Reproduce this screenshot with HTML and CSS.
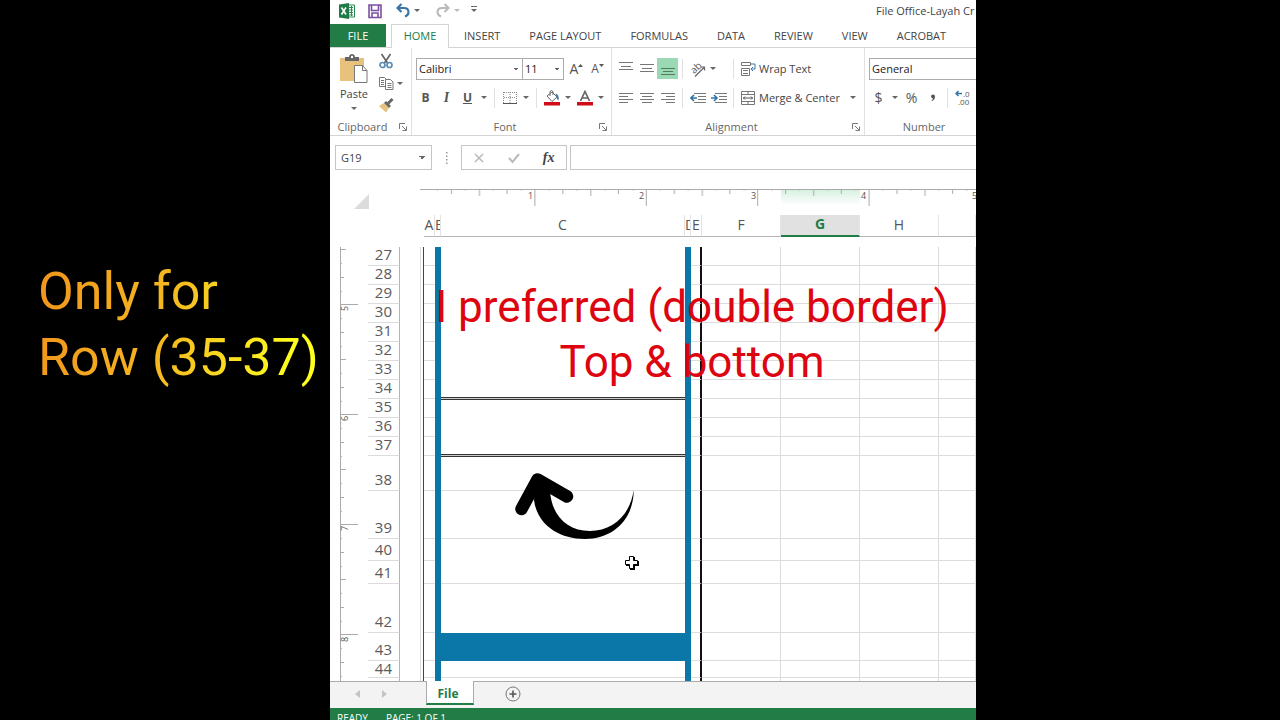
FILE: index.html
```
<!DOCTYPE html>
<html lang="en">

<head>
    <meta charset="UTF-8">
    <meta name="viewport" content="width=device-width, initial-scale=1.0">
    <title>File Office-Layah</title>
    <link rel="stylesheet" href="styles.css">
</head>

<body>
    <div class="stage">
        <aside class="side">
            <p class="note">Only for<br>Row (35-37)</p>
        </aside>

        <main class="excel">
            <header class="titlebar">
                <svg class="logo" width="16" height="16" viewBox="0 0 16 16">
                    <path d="M9 2h6.500v12H9z" fill="#fff" stroke="#2a8a52" />
                    <path d="M10 4.500h4M10 7h4M10 9.500h4M10 12h4M12.500 3v10" stroke="#2a8a52" />
                    <path d="M0 1.500L10 0v16L0 14.500z" fill="#1f7c46" />
                    <path d="M2.500 4.500l4.500 7M7 4.500l-4.500 7" stroke="#fff" stroke-width="1.600" />
                </svg>
                <button class="quick" aria-label="Save"><svg width="16" height="16" viewBox="0 0 16 16" fill="none" stroke="#7a4fa3" stroke-width="1.600"><path d="M2 2h12v12.500H2zM4.500 2v5.500h7V2M5 14v-4h6v4" /></svg></button>
                <button class="quick" aria-label="Undo"><svg width="16" height="16" viewBox="0 0 16 16" fill="none" stroke="#3c76a8" stroke-width="2.200"><path d="M6.500 1L2.500 5l4 4M3 5h6c5.500 0 6 6.500 1 8.500" /></svg></button>
                <button class="drop" aria-label="Undo list"><i class="caret"></i></button>
                <button class="quick" aria-label="Redo"><svg width="16" height="16" viewBox="0 0 16 16" fill="none" stroke="#b9b9b9" stroke-width="2"><path d="M9.500 1l4 4-4 4M13 5H7c-5.500 0-6 6.500-1 8.500" /></svg></button>
                <button class="drop pale" aria-label="Redo list"><i class="caret"></i></button>
                <button class="drop custom" aria-label="Customize toolbar"><i class="caret lined"></i></button>
                <span class="doc">File Office-Layah Cr</span>
            </header>

            <nav class="tabs">
                <a class="tab file" href="#">FILE</a>
                <a class="tab home" href="#">HOME</a>
                <a class="tab" href="#">INSERT</a>
                <a class="tab" href="#">PAGE LAYOUT</a>
                <a class="tab" href="#">FORMULAS</a>
                <a class="tab" href="#">DATA</a>
                <a class="tab" href="#">REVIEW</a>
                <a class="tab" href="#">VIEW</a>
                <a class="tab" href="#">ACROBAT</a>
            </nav>

            <div class="ribbon">
                <section class="group clipboard">
                    <div class="tools">
                        <button class="paste">
                            <svg width="28" height="30" viewBox="0 0 28 30">
                                <path d="M0 4h24v23H0z" fill="#e8c27c" />
                                <path d="M5 7V3h4c0-4 6-4 6 0h4v4z" fill="#666" />
                                <circle cx="12" cy="3" r="1.200" fill="#fff" />
                                <path d="M14.500 11.500h8l4.500 5v12H14.500z" fill="#fff" stroke="#777" />
                                <path d="M22.500 11.500v5H27" fill="none" stroke="#777" />
                            </svg>
                            Paste
                            <i class="caret"></i>
                        </button>
                        <div class="edit">
                            <button class="tool" aria-label="Cut"><svg width="16" height="16" viewBox="0 0 16 16" fill="none" stroke-width="1.700"><path d="M3.500 1l6 9M12.500 1l-6 9" stroke="#666" /><circle cx="4.500" cy="12" r="2.500" stroke="#5b8db5" /><circle cx="11.500" cy="12" r="2.500" stroke="#5b8db5" /></svg></button>
                            <div class="row"><button class="tool" aria-label="Copy"><svg width="16" height="16" viewBox="0 0 16 16" fill="#fff" stroke="#777"><path d="M1.500 2.500h5l2 2v7h-7z" /><path d="M3 5.500h3M3 7.500h3M3 9.500h3" /><path d="M7.500 4.500h5l2.500 2.500v7.500H7.500z" /><path d="M9.500 8.500h4M9.500 10.500h4M9.500 12.500h4" /></svg></button><button class="drop" aria-label="Copy options"><i class="caret"></i></button></div>
                            <button class="tool" aria-label="Format painter"><svg width="16" height="16" viewBox="0 0 16 16"><path d="M1 9l5-3 5 5-3 4.500z" fill="#e8c27c" /><path d="M6 6l2-2 5 5-2 2z" fill="#666" /><path d="M10 6.500l4.500-4.500" stroke="#666" stroke-width="3" /></svg></button>
                        </div>
                    </div>
                    <div class="caption"><span>Clipboard</span><button class="launch" aria-label="Clipboard settings"><svg width="8" height="8" viewBox="0 0 8 8" fill="none" stroke="#777"><path d="M.5 6V.5H6M3 3l4 4M7.500 3.500v4h-4" /></svg></button></div>
                </section>

                <section class="group fonts">
                    <div class="row">
                        <select class="combo family" aria-label="Font"><option>Calibri</option></select>
                        <select class="combo size" aria-label="Font size"><option>11</option></select>
                        <button class="tool grow" aria-label="Increase font size">A<svg width="5" height="10" viewBox="0 0 5 10"><path d="M0 3l2.500-3L5 3z" fill="#555" /></svg></button>
                        <button class="tool shrink" aria-label="Decrease font size">A<svg width="5" height="10" viewBox="0 0 5 10"><path d="M0 0h5L2.500 3z" fill="#555" /></svg></button>
                    </div>
                    <div class="row">
                        <button class="tool"><b>B</b></button>
                        <button class="tool"><em>I</em></button>
                        <button class="tool"><u>U</u></button>
                        <button class="drop" aria-label="Underline options"><i class="caret"></i></button>
                        <i class="sep"></i>
                        <button class="tool" aria-label="Borders"><svg width="14" height="14" viewBox="0 0 14 14" fill="none" stroke="#888"><path d="M.5 1v11M13.500 1v11M7 1v11M1 1.500h12M1 6.500h12" stroke-dasharray="1 1" /><path d="M0 12.500h14" stroke="#555" /></svg></button>
                        <button class="drop" aria-label="Border options"><i class="caret"></i></button>
                        <i class="sep"></i>
                        <button class="tool" aria-label="Fill color"><svg width="16" height="16" viewBox="0 0 16 16"><path d="M3 6l5-4 5 5-5 4.500z" fill="#fff" stroke="#666" /><path d="M6 6V1.500q1.500-2 3 0V5" fill="none" stroke="#666" /><path d="M11.500 3.500q4 1 3 7-2-1-2-4z" fill="#3c76a8" /><path d="M0 12h16v3.500H0z" fill="#d00d16" /></svg></button>
                        <button class="drop" aria-label="Fill options"><i class="caret"></i></button>
                        <button class="tool" aria-label="Font color"><svg width="16" height="16" viewBox="0 0 16 16"><path d="M3.500 11L8 1.500l4.500 9.500M5 8h6" fill="none" stroke="#666" stroke-width="1.700" /><path d="M0 12h16v3.500H0z" fill="#d00d16" /></svg></button>
                        <button class="drop" aria-label="Font color options"><i class="caret"></i></button>
                    </div>
                    <div class="caption"><span>Font</span><button class="launch" aria-label="Font settings"><svg width="8" height="8" viewBox="0 0 8 8" fill="none" stroke="#777"><path d="M.5 6V.5H6M3 3l4 4M7.500 3.500v4h-4" /></svg></button></div>
                </section>

                <section class="group align">
                    <div class="row">
                        <button class="tool" aria-label="Top align"><svg width="14" height="14" viewBox="0 0 14 14" stroke="#777"><path d="M0 .5h14M2 4.500h10M0 7.500h14" /></svg></button>
                        <button class="tool" aria-label="Middle align"><svg width="14" height="14" viewBox="0 0 14 14" stroke="#777"><path d="M0 2.500h14M2 6.500h10M0 9.500h14" /></svg></button>
                        <button class="tool on" aria-label="Bottom align"><svg width="14" height="14" viewBox="0 0 14 14" stroke="#4e7c63"><path d="M0 6.500h14M2 9.500h10M0 12.500h14" /></svg></button>
                        <i class="sep"></i>
                        <button class="tool" aria-label="Orientation"><svg class="angle" width="16" height="16" viewBox="0 0 16 16"><text class="ab" x="0" y="11" transform="rotate(-45 5 7)">ab</text><path d="M5 15.500L14 6.500M14.500 9.500V6H11" fill="none" stroke="#666" stroke-width="1.200" /></svg></button>
                        <button class="drop wide" aria-label="Orientation options"><i class="caret"></i></button>
                        <i class="sep"></i>
                        <button class="labelled"><svg width="16" height="16" viewBox="0 0 16 16" fill="none" stroke="#777"><path d="M1.500 1.500h9v3h-9zM1.500 7.500h8v7h-8zM3 9.500h5M3 12.500h5" /><path d="M10.500 3H15v5h-4M13 6l-2 2 2 2" stroke="#3c76a8" /></svg>Wrap Text</button>
                    </div>
                    <div class="row">
                        <button class="tool" aria-label="Align left"><svg width="14" height="14" viewBox="0 0 14 14" stroke="#777"><path d="M0 2.500h14M0 5.500h9M0 8.500h14M0 11.500h9" /></svg></button>
                        <button class="tool" aria-label="Center"><svg width="14" height="14" viewBox="0 0 14 14" stroke="#777"><path d="M0 2.500h14M2 5.500h10M0 8.500h14M2 11.500h10" /></svg></button>
                        <button class="tool" aria-label="Align right"><svg width="14" height="14" viewBox="0 0 14 14" stroke="#777"><path d="M0 2.500h14M5 5.500h9M0 8.500h14M5 11.500h9" /></svg></button>
                        <i class="sep"></i>
                        <button class="tool" aria-label="Decrease indent"><svg width="16" height="14" viewBox="0 0 16 14" fill="none" stroke="#777"><path d="M4 2.500h12M8 5.500h8M8 8.500h8M4 11.500h12" /><path d="M7 7H1M4 4L1 7l3 3" stroke="#2f74a8" stroke-width="1.600" /></svg></button>
                        <button class="tool" aria-label="Increase indent"><svg width="16" height="14" viewBox="0 0 16 14" fill="none" stroke="#777"><path d="M4 2.500h12M8 5.500h8M8 8.500h8M4 11.500h12" /><path d="M0 7h6M3 4l3 3-3 3" stroke="#2f74a8" stroke-width="1.600" /></svg></button>
                        <i class="sep"></i>
                        <button class="labelled"><svg width="16" height="16" viewBox="0 0 16 16" fill="none" stroke="#777"><path d="M1.500 1.500h13v13h-13zM1.500 4.500h13M1.500 11.500h13M8 1.500v3M8 11.500v3" /><path d="M3 8h10M5 6.500L3.500 8 5 9.500M11 6.500L12.500 8 11 9.500" stroke="#555" /></svg>Merge &amp; Center</button>
                        <button class="drop" aria-label="Merge options"><i class="caret"></i></button>
                    </div>
                    <div class="caption"><span>Alignment</span><button class="launch" aria-label="Alignment settings"><svg width="8" height="8" viewBox="0 0 8 8" fill="none" stroke="#777"><path d="M.5 6V.5H6M3 3l4 4M7.500 3.500v4h-4" /></svg></button></div>
                </section>

                <section class="group number">
                    <div class="row">
                        <select class="combo format" aria-label="Number format"><option>General</option></select>
                    </div>
                    <div class="row">
                        <button class="tool sign">$</button>
                        <button class="drop" aria-label="Currency options"><i class="caret"></i></button>
                        <button class="tool sign">%</button>
                        <button class="tool" aria-label="Comma style"><svg width="6" height="8" viewBox="0 0 6 8"><path d="M1 2.500a2 2 0 1 1 4 0q0 3-3 4.500l-.5-.8Q3 5.300 3 4.300 1 4 1 2.500z" fill="#555" /></svg></button>
                        <i class="sep"></i>
                        <button class="tool" aria-label="Increase decimal"><svg width="16" height="16" viewBox="0 0 16 16"><path d="M7 3.500H1M3.500 1L1 3.500 3.500 6" fill="none" stroke="#2f74a8" stroke-width="1.400" /><text class="dec" x="8" y="7">.0</text><text class="dec" x="3" y="15">.00</text></svg></button>
                    </div>
                    <div class="caption"><span>Number</span><button class="launch" aria-label="Number settings"></button></div>
                </section>
            </div>

            <div class="formula">
                <select class="namebox" aria-label="Name box"><option>G19</option></select>
                <svg class="dots" width="3" height="14" viewBox="0 0 3 14" fill="#999"><path d="M1 1h1.500v1.500H1zM1 4.500h1.500V6H1zM1 8h1.500v1.500H1zM1 11.500h1.500V13H1z" /></svg>
                <div class="checks">
                    <button aria-label="Cancel"><svg width="12" height="12" viewBox="0 0 12 12"><path d="M2 2l8 8M10 2l-8 8" stroke="#bbb" stroke-width="1.600" /></svg></button>
                    <button aria-label="Enter"><svg width="14" height="12" viewBox="0 0 14 12"><path d="M2 6l3.500 4L12 2" fill="none" stroke="#bbb" stroke-width="2" /></svg></button>
                    <button class="fx">fx</button>
                </div>
                <input class="entry" type="text" aria-label="Formula">
            </div>

            <div class="ruler">
                <div class="corner"><svg width="15" height="15" viewBox="0 0 15 15"><path d="M15 0v15H0z" fill="#dcdcdc" /></svg></div>
                <svg class="inches" height="18">
                    <defs>
                        <pattern id="inch" x="3" y="0" width="111.400" height="18" patternUnits="userSpaceOnUse">
                            <path d="M.5 0v17M28.500 0v5M56.500 0v7M84 0v5" stroke="#aaa" />
                            <path d="M14.500 0v2M42.500 0v2M70.500 0v2M98.500 0v2" stroke="#ccc" />
                        </pattern>
                        <linearGradient id="mint" x2="0" y2="1"><stop offset="0" stop-color="#d3f0de" /><stop offset="1" stop-color="#fff" /></linearGradient>
                    </defs>
                    <rect x="361" width="79" height="16" fill="url(#mint)" />
                    <rect x="4" width="100%" height="18" fill="url(#inch)" />
                    <path d="M0 .5h4000" stroke="#aaa" />
                    <text x="108" y="10">1</text>
                    <text x="219" y="10">2</text>
                    <text x="331" y="10">3</text>
                    <text x="441" y="10">4</text>
                    <text x="552" y="10">5</text>
                </svg>
            </div>

            <div class="sheet">
                <svg class="vruler" width="38" height="434">
                    <defs>
                        <pattern id="vinch" x="10" y="57" width="20" height="110" patternUnits="userSpaceOnUse">
                            <path d="M0 .5h18M0 28.500h4M0 55.500h6M0 83.500h4" stroke="#aaa" />
                            <path d="M0 14.500h2M0 42.500h2M0 69.500h2M0 97.500h2" stroke="#bbb" />
                        </pattern>
                    </defs>
                    <rect x="10" width="18" height="434" fill="url(#vinch)" />
                    <path d="M10.500 0v434" stroke="#aaa" />
                    <text transform="translate(18 64) rotate(-90)">5</text>
                    <text transform="translate(18 174) rotate(-90)">6</text>
                    <text transform="translate(18 284) rotate(-90)">7</text>
                    <text transform="translate(18 395) rotate(-90)">8</text>
                </svg>
                <table class="cells">
                    <colgroup>
                        <col class="w-head"><col class="w-gap"><col class="w-thin"><col class="w-bar"><col class="w-main"><col class="w-bar"><col class="w-thin"><col class="w-cell"><col class="w-cell"><col class="w-cell"><col>
                    </colgroup>
                    <thead>
                        <tr><td></td><td></td><th>A</th><th>B</th><th>C</th><th>D</th><th>E</th><th>F</th><th class="picked">G</th><th>H</th><th></th></tr>
                        <tr class="spacer"><td colspan="11"></td></tr>
                    </thead>
                    <tbody>
                        <tr class="plain"><th>27</th><td></td><td></td><td></td><td></td><td></td><td></td><td></td><td></td><td></td><td></td></tr>
                        <tr class="plain"><th>28</th><td></td><td></td><td></td><td></td><td></td><td></td><td></td><td></td><td></td><td></td></tr>
                        <tr class="plain"><th>29</th><td></td><td></td><td></td><td></td><td></td><td></td><td></td><td></td><td></td><td></td></tr>
                        <tr class="plain"><th>30</th><td></td><td></td><td></td><td></td><td></td><td></td><td></td><td></td><td></td><td></td></tr>
                        <tr class="plain"><th>31</th><td></td><td></td><td></td><td></td><td></td><td></td><td></td><td></td><td></td><td></td></tr>
                        <tr class="plain"><th>32</th><td></td><td></td><td></td><td></td><td></td><td></td><td></td><td></td><td></td><td></td></tr>
                        <tr class="plain"><th>33</th><td></td><td></td><td></td><td></td><td></td><td></td><td></td><td></td><td></td><td></td></tr>
                        <tr class="ruled"><th>34</th><td></td><td></td><td></td><td></td><td></td><td></td><td></td><td></td><td></td><td></td></tr>
                        <tr class="plain"><th>35</th><td></td><td></td><td></td><td></td><td></td><td></td><td></td><td></td><td></td><td></td></tr>
                        <tr class="plain"><th>36</th><td></td><td></td><td></td><td></td><td></td><td></td><td></td><td></td><td></td><td></td></tr>
                        <tr class="ruled"><th>37</th><td></td><td></td><td></td><td></td><td></td><td></td><td></td><td></td><td></td><td></td></tr>
                        <tr class="h-35"><th>38</th><td></td><td></td><td></td><td></td><td></td><td></td><td></td><td></td><td></td><td></td></tr>
                        <tr class="h-48"><th>39</th><td></td><td></td><td></td><td></td><td></td><td></td><td></td><td></td><td></td><td></td></tr>
                        <tr class="h-22 plain"><th>40</th><td></td><td></td><td></td><td></td><td></td><td></td><td></td><td></td><td></td><td></td></tr>
                        <tr class="h-23"><th>41</th><td></td><td></td><td></td><td></td><td></td><td></td><td></td><td></td><td></td><td></td></tr>
                        <tr class="h-49 plain"><th>42</th><td></td><td></td><td></td><td></td><td></td><td></td><td></td><td></td><td></td><td></td></tr>
                        <tr class="h-28 filled"><th>43</th><td></td><td></td><td></td><td></td><td></td><td></td><td></td><td></td><td></td><td></td></tr>
                        <tr class="h-17"><th>44</th><td></td><td></td><td></td><td></td><td></td><td></td><td></td><td></td><td></td><td></td></tr>
                        <tr class="h-3"><th></th><td></td><td></td><td></td><td></td><td></td><td></td><td></td><td></td><td></td><td></td></tr>
                    </tbody>
                </table>
            </div>

            <div class="sheettabs">
                <button class="arrow" aria-label="Previous sheet"><svg width="5" height="8" viewBox="0 0 5 8"><path d="M5 0v8L0 4z" fill="#c4c4c4" /></svg></button>
                <button class="arrow" aria-label="Next sheet"><svg width="5" height="8" viewBox="0 0 5 8"><path d="M0 0v8l5-4z" fill="#c4c4c4" /></svg></button>
                <button class="sheettab">File</button>
                <button class="add" aria-label="New sheet"><svg width="16" height="16" viewBox="0 0 16 16" fill="none" stroke="#777"><circle cx="8" cy="8" r="7" /><path d="M8 4.500v7M4.500 8h7" stroke="#555" stroke-width="1.600" /></svg></button>
            </div>
            <footer class="status"><span>READY</span><span>PAGE: 1 OF 1</span></footer>

            <p class="callout">I preferred (double border)<br>Top &amp; bottom</p>
            <svg class="swoosh" width="122" height="72" viewBox="0 0 122 72">
                <path d="M7.500 39L23.500 9.500 53 26.500" fill="none" stroke="#000" stroke-width="12.500" stroke-linecap="round" stroke-linejoin="round" />
                <path d="M22 12L20 30C23 54 44 69 71 69c29 0 49-21 48.700-49C116 46 98 61 76 61 52 61 37 44 36 20z" />
            </svg>
            <svg class="pointer" width="16" height="16" viewBox="0 0 16 16">
                <path d="M6 2h5v4h4v5h-4v4H6v-4H2V6h4z" fill="#000" />
                <path d="M5.500 1.500h4v4h4v4h-4v4h-4v-4h-4v-4h4z" fill="#fff" stroke="#000" />
            </svg>
        </main>
    </div>
</body>

</html>
```
FILE: styles.css
```
* {
    box-sizing: border-box;
}

body {
    margin: 0;
    background: #000;
    color: #444;
    font-family: "Open Sans", "Noto Sans", sans-serif;
    font-size: 11px;
}

button,
select,
input {
    margin: 0;
    padding: 0;
    border: 0;
    background: none;
    color: inherit;
    font: inherit;
}

svg {
    display: block;
    flex: none;
}

a {
    color: inherit;
    text-decoration: none;
}

.stage {
    display: grid;
    grid-template-columns: 330px minmax(0, 1fr) 304px;
    height: 100vh;
    overflow: hidden;
}

.side {
    padding: 259px 0 0 38px;
}

.note {
    width: max-content;
    margin: 0;
    background: linear-gradient(100deg, #f0941c, #f5b820 45%, #ffff1e 90%);
    -webkit-background-clip: text;
    background-clip: text;
    color: transparent;
    font-family: Roboto, sans-serif;
    font-size: 52px;
    line-height: 66px;
    white-space: nowrap;
}

.excel {
    position: relative;
    overflow: hidden;
    background: #fff;
}

/* title bar */

.titlebar {
    display: flex;
    align-items: center;
    height: 23px;
    padding: 0 0 2px 9px;
    white-space: nowrap;
}

.quick {
    margin-left: 12px;
}

.doc {
    margin-left: 396px;
}

.drop {
    display: flex;
    flex: none;
    align-items: center;
    justify-content: center;
    width: 12px;
    height: 21px;
}

.wide {
    justify-content: flex-start;
    width: 21px;
    padding-left: 2px;
}

.caret {
    border: solid transparent;
    border-width: 3px 3px 0;
    border-top-color: #666;
}

.pale .caret {
    border-top-color: #bbb;
}

.lined {
    position: relative;
}

.lined::before {
    content: "";
    position: absolute;
    top: -6px;
    left: -3px;
    width: 6px;
    height: 1px;
    background: #666;
}

.custom {
    margin-left: 5px;
}

/* ribbon tabs */

.tabs {
    display: flex;
    gap: 1px;
    height: 25px;
    padding-top: 1px;
    border-bottom: 1px solid #d4d4d4;
    white-space: nowrap;
}

.tab {
    padding: 0 14px;
    line-height: 23px;
}

.file {
    width: 56px;
    margin-right: 4px;
    padding: 0;
    background: #217c46;
    color: #fff;
    text-align: center;
}

.home {
    width: 58px;
    height: 24px;
    padding: 0;
    border: 1px solid #d4d4d4;
    border-bottom: 0;
    background: #fff;
    color: #217c46;
    line-height: 22px;
    text-align: center;
}

/* ribbon */

.ribbon {
    display: flex;
    height: 88px;
    border-bottom: 1px solid #d4d4d4;
}

.group {
    display: flex;
    flex: none;
    flex-direction: column;
    padding: 6px 0 0 3px;
    border-right: 1px solid #e1e1e1;
}

.clipboard {
    width: 82px;
    padding: 2px 0 0;
}

.fonts {
    width: 200px;
}

.align {
    width: 253px;
}

.number {
    width: 132px;
}

.row {
    display: flex;
    flex: none;
    align-items: center;
    height: 29px;
}

.tools {
    display: flex;
    height: 66px;
}

.paste {
    display: flex;
    flex-direction: column;
    align-items: center;
    width: 48px;
    padding-top: 4px;
    line-height: 20px;
}

.paste .caret {
    margin-top: 3px;
}

.edit .row {
    height: 22px;
}

.edit .tool {
    width: 16px;
    height: 22px;
}

.caption {
    display: flex;
    height: 17px;
    margin-top: auto;
    color: #666;
    line-height: 17px;
    text-align: center;
}

.caption span {
    flex: 1;
    padding-right: 4px;
}

.launch {
    display: flex;
    align-items: center;
    width: 12px;
}

.tool {
    display: flex;
    flex: none;
    align-items: center;
    justify-content: center;
    width: 21px;
    height: 21px;
    color: #555;
    font-size: 12px;
}

.tool em {
    font-family: "Liberation Serif", serif;
    font-size: 14px;
    font-weight: bold;
}

.tool u {
    font-weight: bold;
}

.grow {
    margin-left: 2px;
    font-size: 14px;
}

.sign {
    font-size: 14px;
}

.on {
    background: #9bd8b4;
}

.angle {
    overflow: visible;
}

.ab {
    fill: #555;
    font-size: 10px;
}

.dec {
    fill: #555;
    font-size: 8px;
}

.sep {
    flex: none;
    width: 1px;
    height: 20px;
    margin: 0 4px;
    background: #e1e1e1;
}

.labelled {
    display: flex;
    flex: none;
    align-items: center;
    gap: 3px;
    padding-left: 2px;
    white-space: nowrap;
}

.labelled + .drop {
    margin-left: 7px;
}

.combo,
.namebox {
    height: 22px;
    padding-left: 2px;
    border: 1px solid #ababab;
    background-color: #fff;
    background-image: linear-gradient(45deg, transparent 50%, #666 50%), linear-gradient(-45deg, transparent 50%, #666 50%);
    background-position: right 6px top 9px, right 3px top 9px;
    background-repeat: no-repeat;
    background-size: 3px 3px;
    -webkit-appearance: none;
    appearance: none;
    color: #222;
}

/* two wedges meeting in a downward caret */
.combo,
.namebox {
    background-image: linear-gradient(to top right, transparent 50%, #666 50%), linear-gradient(to top left, transparent 50%, #666 50%);
}

.combo {
    margin-left: 1px;
}

.family {
    width: 107px;
}

.size {
    width: 42px;
    margin-left: -1px;
}

.format {
    width: 122px;
}

/* formula bar */

.formula {
    display: flex;
    align-items: center;
    height: 53px;
    padding: 0 0 10px 5px;
}

.namebox {
    width: 97px;
    height: 25px;
    padding-left: 5px;
    border-color: #c6c6c6;
    background-position: right 9px top 10px, right 6px top 10px;
    color: #444;
}

.dots {
    margin: 0 13px;
}

.checks {
    display: flex;
    align-items: center;
    width: 106px;
    height: 25px;
    border: 1px solid #c6c6c6;
}

.checks button {
    display: flex;
    flex: 1;
    justify-content: center;
}

.checks .fx {
    font-family: "Liberation Serif", serif;
    font-size: 14px;
    font-style: italic;
    font-weight: bold;
}

.entry {
    flex: 1;
    min-width: 0;
    height: 25px;
    margin-left: 3px;
    border: 1px solid #c6c6c6;
    border-right: 0;
}

/* rulers */

.ruler {
    display: flex;
    height: 26px;
}

.corner {
    width: 90px;
    padding: 5px 0 0 24px;
}

.inches {
    flex: 1;
    min-width: 0;
}

.ruler text,
.vruler text {
    fill: #555;
    font-size: 9px;
}

.vruler {
    margin-top: 32px;
}

/* sheet */

.sheet {
    display: flex;
}

.cells {
    flex: 1;
    width: 0;
    border-spacing: 0;
    table-layout: fixed;
}

.w-head {
    width: 32px;
}

.w-gap {
    width: 24px;
}

.w-thin {
    width: 11px;
}

.w-bar {
    width: 6px;
}

.w-main {
    width: 244px;
}

.w-cell {
    width: 79px;
}

.cells th,
.cells td {
    overflow: hidden;
    padding: 0;
    font-size: 15px;
    font-weight: normal;
    line-height: 14px;
}

thead tr {
    height: 22px;
}

.cells thead th {
    padding-bottom: 2px;
    border-right: 1px solid #e4e4e4;
    border-bottom: 1px solid #b5b5b5;
    color: #555;
    font-size: 14px;
}

.cells thead .picked {
    border-bottom: 2px solid #217c46;
    background: #e1e1e1;
    color: #217c46;
    font-weight: bold;
}

.cells .spacer {
    height: 10px;
}

.cells .spacer td {
    line-height: 0;
}

tbody tr {
    height: 19px;
}

tbody th,
tbody td {
    border-bottom: 1px solid #dcdcdc;
}

.cells tbody th {
    padding: 0 7px 4px 0;
    border-right: 1px solid #b5b5b5;
    color: #5a5a5a;
    text-align: right;
    vertical-align: bottom;
}

tbody td:nth-child(2) {
    border-right: 1px solid #444;
    border-bottom: 0;
    background: linear-gradient(#ddd, #ddd) 20px 0 / 1px 100% no-repeat;
}

tbody td:nth-child(4),
tbody td:nth-child(6) {
    border-bottom: 0;
    background: #0b77a8;
}

tbody td:nth-child(7) {
    border-right: 2px solid #111;
}

tbody td:nth-child(n + 8) {
    border-right: 1px solid #dcdcdc;
}

.plain td:nth-child(5) {
    border-bottom: 0;
}

/* double rule: dark, light, dark */
.ruled td:nth-child(5) {
    border-bottom: 1px solid #ccc;
    box-shadow: inset 0 -1px #333;
}

.ruled + tr td:nth-child(5) {
    border-top: 1px solid #333;
}

.filled td:nth-child(5) {
    border-bottom: 0;
    background: #0b77a8;
}

.h-35 {
    height: 35px;
}

.h-48 {
    height: 48px;
}

.h-22 {
    height: 22px;
}

.h-23 {
    height: 23px;
}

.h-49 {
    height: 49px;
}

.h-28 {
    height: 28px;
}

.h-17 {
    height: 17px;
}

.cells .h-17 th {
    padding-bottom: 2px;
}

.h-3 {
    height: 3px;
}

.cells .h-3 th,
.cells .h-3 td {
    padding-bottom: 0;
    border-bottom: 0;
    line-height: 0;
}

/* bottom bars */

.sheettabs {
    display: flex;
    align-items: flex-start;
    height: 27px;
    padding-left: 14px;
    border-top: 1px solid #ababab;
    background: #f3f3f3;
}

.arrow {
    display: flex;
    align-items: center;
    justify-content: center;
    width: 27px;
    height: 24px;
}

.sheettab {
    width: 48px;
    height: 24px;
    margin: -1px 31px 0 28px;
    padding: 2px 4px 0 0;
    border: solid #ababab;
    border-width: 0 1px;
    border-bottom: 2px solid #217c46;
    background: #fff;
    color: #217c46;
    font-size: 12px;
    font-weight: bold;
}

.add {
    height: 24px;
}

.status {
    display: flex;
    gap: 18px;
    height: 23px;
    padding-left: 7px;
    background: #217c46;
    color: #fff;
    font-size: 10px;
    line-height: 20px;
}

/* notes over the sheet */

.callout {
    position: absolute;
    top: 280px;
    right: 0;
    left: 78px;
    margin: 0;
    color: #dc0510;
    font-family: Roboto, sans-serif;
    font-size: 44px;
    line-height: 55px;
    text-align: center;
    white-space: nowrap;
}

.swoosh {
    position: absolute;
    top: 470px;
    left: 184px;
}

.pointer {
    position: absolute;
    top: 555px;
    left: 294px;
}
```
